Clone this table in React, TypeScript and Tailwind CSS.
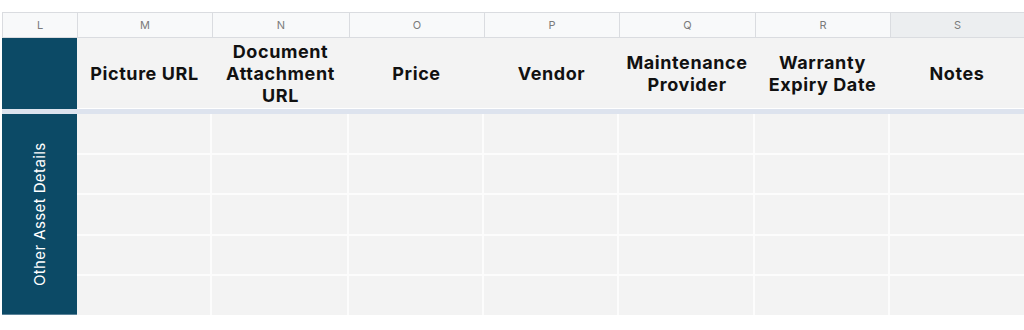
import React from "react";

const cols = [
  { letter: "M", w: "w-[135px]", label: ["Picture URL"] },
  { letter: "N", w: "w-[137px]", label: ["Document", "Attachment", "URL"] },
  { letter: "O", w: "w-[135px]", label: ["Price"] },
  { letter: "P", w: "w-[135px]", label: ["Vendor"] },
  { letter: "Q", w: "w-[136px]", label: ["Maintenance", "Provider"] },
  { letter: "R", w: "w-[135px]", label: ["Warranty", "Expiry Date"] },
  { letter: "S", w: "flex-1", label: ["Notes"] },
];

export default function App() {
  return (
    <div className="w-[1024px] h-[330px] bg-white pt-[12px] pl-[2px] overflow-hidden font-['Inter','Liberation_Sans',sans-serif]">
      {/* column letters */}
      <div className="flex h-[26px] border-t border-l border-b border-[#dadce0]">
        <div className="w-[75px] shrink-0 bg-[#f8f9fa] border-r border-[#dadce0] flex items-center justify-center text-[11px] text-[#7b7b7b]">
          L
        </div>
        {cols.map((c) => (
          <div
            key={c.letter}
            className={`${c.w} shrink-0 ${c.letter === "S" ? "bg-[#eceef0]" : "bg-[#f8f9fa] border-r border-[#dadce0]"} flex items-center justify-center text-[11px] text-[#7b7b7b]`}
          >
            {c.letter}
          </div>
        ))}
      </div>
      {/* header row */}
      <div className="flex h-[71px]">
        <div className="w-[75px] shrink-0 bg-[#0c4a66]" />
        {cols.map((c) => (
          <div
            key={c.letter}
            className={`${c.w} shrink-0 bg-[#f3f3f3] flex flex-col items-center justify-center pt-[1px] text-[18px] leading-[22px] font-bold text-[#111111] tracking-[0.6px] border-b border-white`}
          >
            {c.label.map((l) => (
              <span key={l}>{l}</span>
            ))}
          </div>
        ))}
      </div>
      {/* band */}
      <div className="h-[5px] bg-[#dde3ee]" />
      {/* body */}
      <div className="flex h-[201px]">
        <div className="w-[75px] shrink-0 bg-[#0c4a66] border-b border-[#5a8298] flex items-center justify-center">
          <span className="-rotate-90 whitespace-nowrap text-white text-[15px] tracking-[0.4px]">
            Other Asset Details
          </span>
        </div>
        {cols.map((c) => (
          <div key={c.letter} className={`${c.w} shrink-0 flex flex-col ${c.letter === "S" ? "" : "border-r-2 border-[#fcfcfc]"}`}>
            {[0, 1, 2, 3, 4].map((r) => (
              <div key={r} className={`flex-1 bg-[#f3f3f3] ${r < 4 ? "border-b-2 border-[#fcfcfc]" : ""}`} />
            ))}
          </div>
        ))}
      </div>
    </div>
  );
}
